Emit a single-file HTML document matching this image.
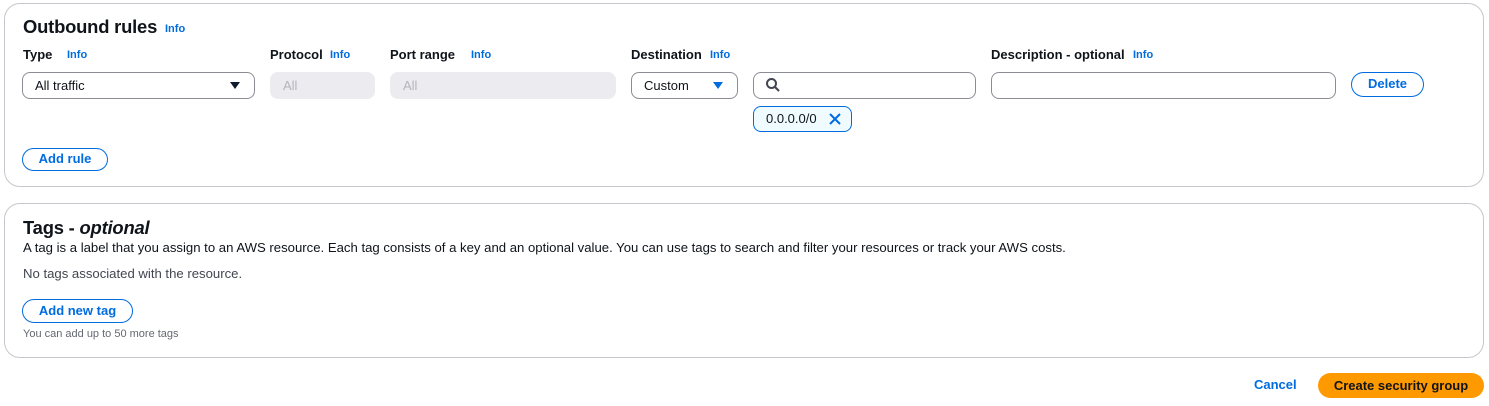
<!DOCTYPE html>
<html><head><style>
*{box-sizing:border-box;margin:0;padding:0}
body{width:1489px;height:406px;background:#fff;font-family:"Liberation Sans",Arial,sans-serif;color:#0f141a;position:relative;overflow:hidden}
.a{position:absolute;white-space:nowrap}
.panel{position:absolute;border:1px solid #c6c6cd;border-radius:16px;background:#fff}
.h{font-size:18.4px;font-weight:bold;letter-spacing:-0.2px}
.lbl{font-size:13px;font-weight:bold}
.info{font-size:11px;font-weight:bold;color:#006ce0}
.inp{position:absolute;height:27px;border:1px solid #8c8c94;border-radius:8px;font-size:13px;padding:5px 12px;background:#fff}
.dis{position:absolute;height:27px;border-radius:8px;background:#ebebf0;font-size:13px;color:#b4b4bb;padding:6px 13px}
.btn{position:absolute;border:1.5px solid #006ce0;border-radius:20px;color:#006ce0;font-size:13px;font-weight:bold;text-align:center;background:#fff}
.tri{position:absolute;width:0;height:0;border-left:5px solid transparent;border-right:5px solid transparent;border-top:7px solid #0f141a}
.t13{font-size:13.15px}
</style></head><body>
<div class="panel" style="left:4px;top:3px;width:1480px;height:184px"></div>
<div class="a h" style="left:23px;top:16px">Outbound rules</div>
<div class="a info" style="left:165px;top:23px">Info</div>
<div class="a lbl" style="left:23px;top:47px">Type</div><div class="a info" style="left:67px;top:49px">Info</div>
<div class="a lbl" style="left:270px;top:47px">Protocol</div><div class="a info" style="left:330px;top:49px">Info</div>
<div class="a lbl" style="left:390px;top:47px">Port range</div><div class="a info" style="left:471px;top:49px">Info</div>
<div class="a lbl" style="left:631px;top:47px">Destination</div><div class="a info" style="left:710px;top:49px">Info</div>
<div class="a lbl" style="left:991px;top:47px">Description - optional</div><div class="a info" style="left:1133px;top:49px">Info</div>
<div class="inp" style="left:22px;top:72px;width:233px">All traffic</div>
<div class="tri" style="left:230px;top:82px;border-top-color:#0f1b2a"></div>
<div class="dis" style="left:270px;top:72px;width:105px">All</div>
<div class="dis" style="left:390px;top:72px;width:226px">All</div>
<div class="inp" style="left:631px;top:72px;width:107px">Custom</div>
<div class="tri" style="left:713px;top:82px;border-top-color:#006ce0"></div>
<div class="inp" style="left:753px;top:72px;width:223px"></div>
<svg class="a" style="left:765px;top:77px" width="16" height="16" viewBox="0 0 16 16"><circle cx="6.5" cy="6.5" r="4.5" fill="none" stroke="#424650" stroke-width="2"/><path d="M10 10l4 4" stroke="#424650" stroke-width="2"/></svg>
<div class="inp" style="left:991px;top:72px;width:345px"></div>
<div class="btn" style="left:1351px;top:72px;width:73px;height:25px;line-height:22px">Delete</div>
<div class="a" style="left:753px;top:106px;width:99px;height:26px;border:1px solid #006ce0;border-radius:8px;background:#f0fbff;font-size:13px;padding:4px 12px">0.0.0.0/0</div>
<svg class="a" style="left:828px;top:112px" width="14" height="14" viewBox="0 0 14 14"><path d="M2 2l10 10M12 2L2 12" stroke="#006ce0" stroke-width="2"/></svg>
<div class="btn" style="left:22px;top:148px;width:86px;height:23px;line-height:20px">Add rule</div>

<div class="panel" style="left:4px;top:203px;width:1480px;height:155px"></div>
<div class="a h" style="left:23px;top:217px">Tags - <i>optional</i></div>
<div class="a t13" style="left:23px;top:240px">A tag is a label that you assign to an AWS resource. Each tag consists of a key and an optional value. You can use tags to search and filter your resources or track your AWS costs.</div>
<div class="a t13" style="left:23px;top:266px;color:#424650">No tags associated with the resource.</div>
<div class="btn" style="left:22px;top:299px;width:111px;height:24px;line-height:21px">Add new tag</div>
<div class="a" style="left:23px;top:328px;font-size:11px;color:#656871">You can add up to 50 more tags</div>

<div class="a" style="left:1254px;top:377px;font-size:13px;font-weight:bold;color:#006ce0">Cancel</div>
<div class="a" style="left:1318px;top:373px;width:166px;height:25px;border-radius:20px;background:#ff9900;font-size:13px;font-weight:bold;text-align:center;line-height:25px">Create security group</div>
</body></html>
